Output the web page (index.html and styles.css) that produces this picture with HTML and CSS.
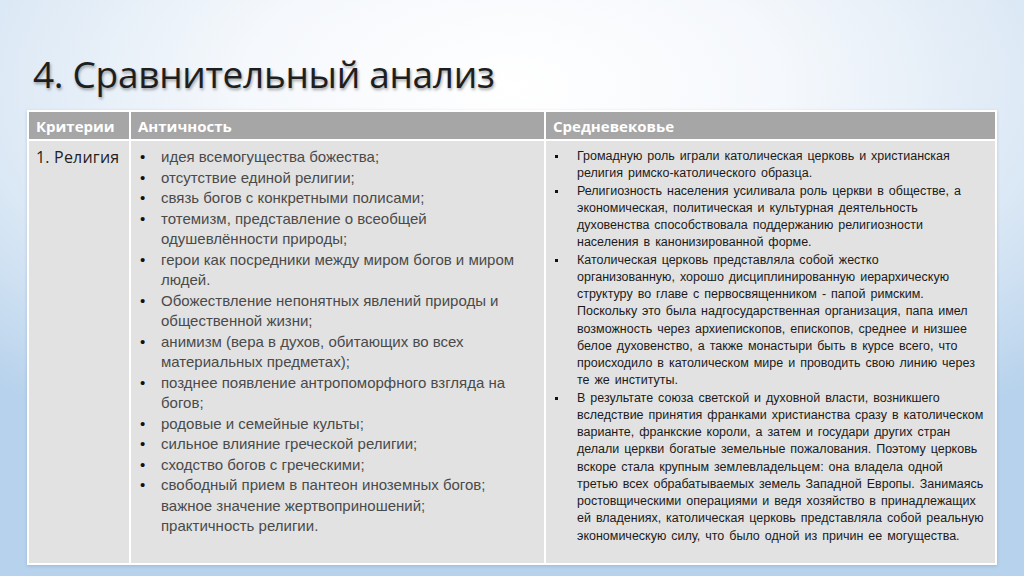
FILE: index.html
```html
<!DOCTYPE html>
<html lang="ru">
<head>
<meta charset="utf-8">
<link rel="stylesheet" href="styles.css">
</head>
<body>
<div class="slide">
  <h1 class="title">4. Сравнительный анализ</h1>
  <table class="grid">
    <thead>
      <tr>
        <th class="c1">Критерии</th>
        <th class="c2">Античность</th>
        <th class="c3">Средневековье</th>
      </tr>
    </thead>
    <tbody>
      <tr>
        <td class="c1 crit">1. Религия</td>
        <td class="c2">
          <ul class="list big">
            <li><span class="b">•</span><span class="t">идея всемогущества божества;</span></li>
            <li><span class="b">•</span><span class="t">отсутствие единой религии;</span></li>
            <li><span class="b">•</span><span class="t">связь богов с конкретными полисами;</span></li>
            <li><span class="b">•</span><span class="t">тотемизм, представление о всеобщей<br>одушевлённости природы;</span></li>
            <li><span class="b">•</span><span class="t">герои как посредники между миром богов и миром<br>людей.</span></li>
            <li><span class="b">•</span><span class="t">Обожествление непонятных явлений природы и<br>общественной жизни;</span></li>
            <li><span class="b">•</span><span class="t">анимизм (вера в духов, обитающих во всех<br>материальных предметах);</span></li>
            <li><span class="b">•</span><span class="t">позднее появление антропоморфного взгляда на<br>богов;</span></li>
            <li><span class="b">•</span><span class="t">родовые и семейные культы;</span></li>
            <li><span class="b">•</span><span class="t">сильное влияние греческой религии;</span></li>
            <li><span class="b">•</span><span class="t">сходство богов с греческими;</span></li>
            <li><span class="b">•</span><span class="t">свободный прием в пантеон иноземных богов;<br>важное значение жертвоприношений;<br>практичность религии.</span></li>
          </ul>
        </td>
        <td class="c3">
          <ul class="list small">
            <li><span class="b"><i class="sq"></i></span><span class="t">Громадную роль играли католическая церковь и христианская<br>религия римско-католического образца.</span></li>
            <li><span class="b"><i class="sq"></i></span><span class="t">Религиозность населения усиливала роль церкви в обществе, а<br>экономическая, политическая и культурная деятельность<br>духовенства способствовала поддержанию религиозности<br>населения в канонизированной форме.</span></li>
            <li><span class="b"><i class="sq"></i></span><span class="t">Католическая церковь представляла собой жестко<br>организованную, хорошо дисциплинированную иерархическую<br>структуру во главе с первосвященником - папой римским.<br>Поскольку это была надгосударственная организация, папа имел<br>возможность через архиепископов, епископов, среднее и низшее<br>белое духовенство, а также монастыри быть в курсе всего, что<br>происходило в католическом мире и проводить свою линию через<br>те же институты.</span></li>
            <li><span class="b"><i class="sq"></i></span><span class="t">В результате союза светской и духовной власти, возникшего<br>вследствие принятия франками христианства сразу в католическом<br>варианте, франкские короли, а затем и государи других стран<br>делали церкви богатые земельные пожалования. Поэтому церковь<br>вскоре стала крупным землевладельцем: она владела одной<br>третью всех обрабатываемых земель Западной Европы. Занимаясь<br>ростовщическими операциями и ведя хозяйство в принадлежащих<br>ей владениях, католическая церковь представляла собой реальную<br>экономическую силу, что было одной из причин ее могущества.</span></li>
          </ul>
        </td>
      </tr>
    </tbody>
  </table>
</div>
</body>
</html>
```

FILE: styles.css
```css
html, body {
  margin: 0;
  padding: 0;
}
body {
  width: 1024px;
  height: 576px;
  overflow: hidden;
}
.slide {
  width: 1024px;
  height: 576px;
  box-sizing: border-box;
  padding: 51px 0 0 27px;
  background:
    radial-gradient(ellipse 75% 70% at 50% 15%, #ffffff 0%, #f5f8fc 35%, #dbe8f5 70%, #b7d2ec 100%);
  font-family: "Liberation Sans", Arial, sans-serif;
}
.title {
  margin: 0 0 0 6px;
  height: 59px;
  font-family: "Open Sans", "Noto Sans", sans-serif;
  font-weight: 400;
  font-size: 37px;
  line-height: 46px;
  color: #1e1e1e;
  letter-spacing: -0.3px;
  text-shadow: 1px 2px 3px rgba(0, 0, 0, 0.35);
}
.grid {
  border-collapse: collapse;
  width: 970px;
  table-layout: fixed;
  box-shadow: 0 1px 3px rgba(80, 110, 150, 0.25);
}
.grid th, .grid td {
  border: 2px solid #ffffff;
  vertical-align: top;
}
.grid .c1 { width: 93px; }
.grid .c2 { width: 406px; }
.grid th {
  background: #a6a6a6;
  color: #ffffff;
  text-align: left;
  font-family: "Open Sans", "Noto Sans", sans-serif;
  font-weight: 700;
  font-size: 15px;
  height: 27px;
  padding: 0 0 0 7px;
  vertical-align: middle;
}
.grid td {
  background: #e2e2e2;
  height: 416px;
  padding: 6px 0 0 9px;
}
.grid td.crit {
  padding-left: 7px;
  font-family: "Open Sans", "Noto Sans", sans-serif;
  font-size: 16px;
  color: #222222;
  letter-spacing: 0.2px;
  line-height: 20px;
}
.list {
  list-style: none;
  margin: 0;
  padding: 0;
}
.list li {
  display: flex;
}
.list .t {
  white-space: nowrap;
}
.big {
  font-size: 15px;
  line-height: 20.5px;
  color: #4a4a4a;
}
.big .b {
  width: 21px;
  flex: none;
  color: #111111;
}
.small {
  margin-top: 1px;
  font-size: 12.5px;
  line-height: 17.25px;
  color: #1a1a1a;
  word-spacing: 1.5px;
}
.small .b {
  width: 22px;
  flex: none;
}
.sq {
  display: inline-block;
  width: 3px;
  height: 3px;
  background: #111111;
  vertical-align: middle;
}
```
